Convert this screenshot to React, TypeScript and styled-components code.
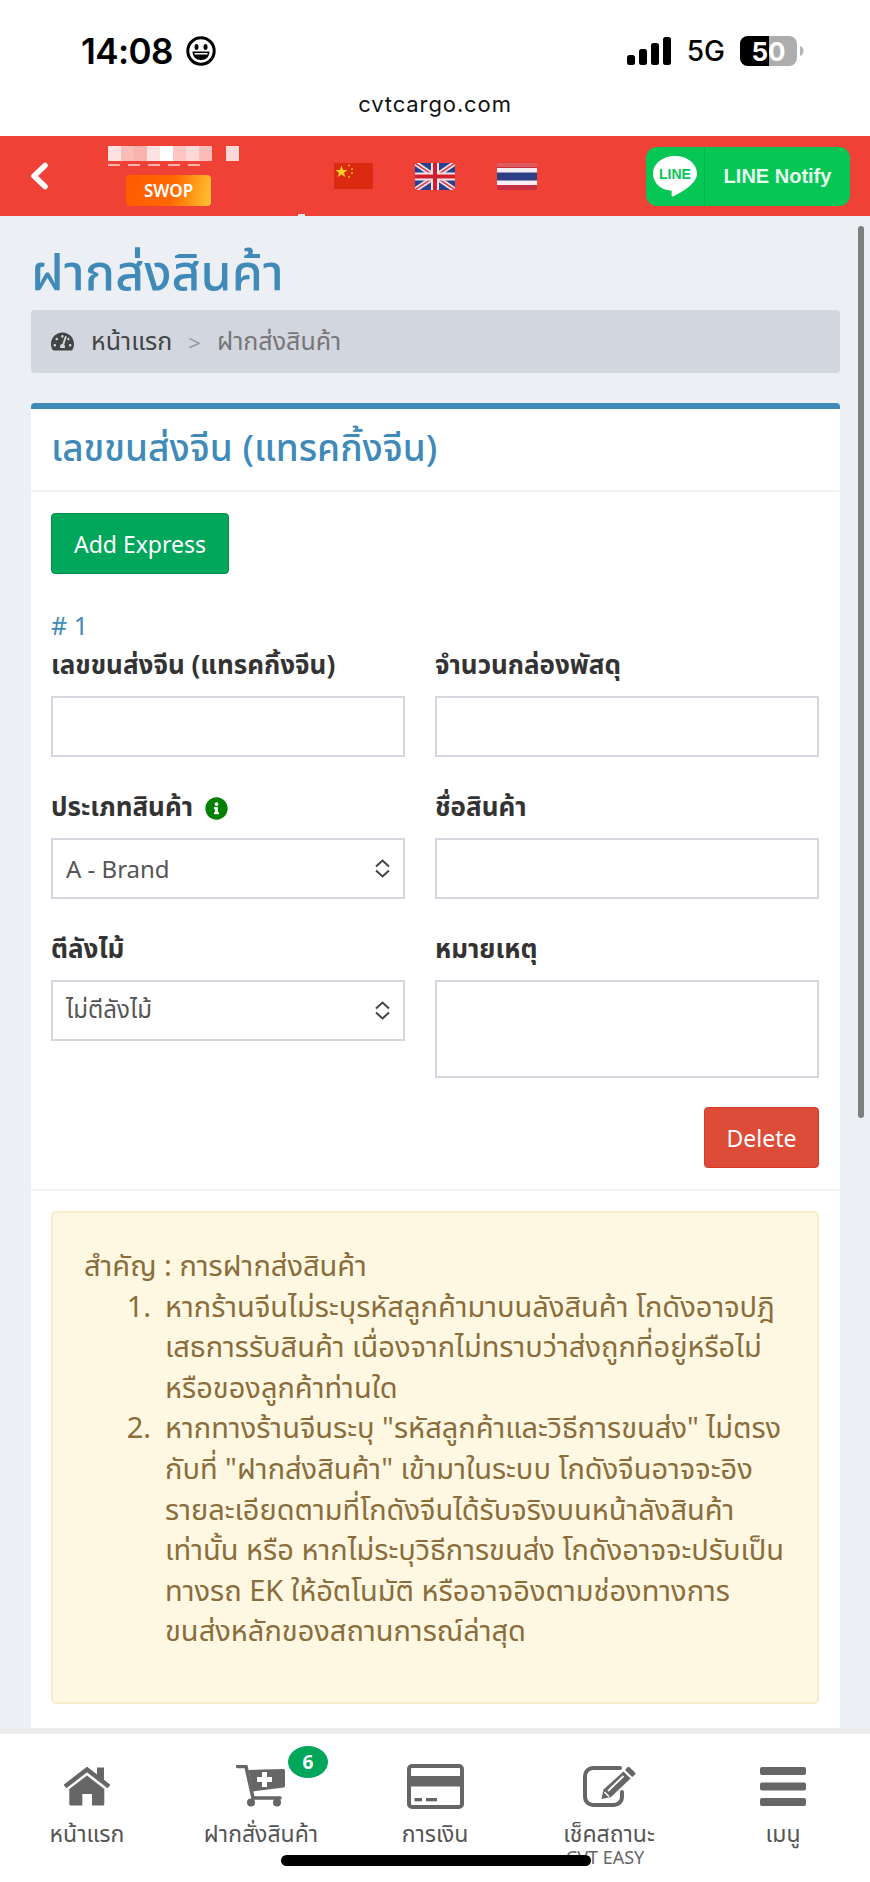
import React from "react";
import styled, { createGlobalStyle } from "styled-components";
import { FaTachometerAlt, FaInfoCircle } from "react-icons/fa";

const Global = createGlobalStyle`
  html, body { margin: 0; padding: 0; background: #fff; }
  * { box-sizing: border-box; }
  body { font-family: "Noto Sans", "Noto Sans Thai", "Liberation Sans", sans-serif; }
`;

const Page = styled.div`
  position: relative;
  width: 870px;
  height: 1882px;
  overflow: hidden;
  display: flex;
  flex-direction: column;
  background: #ecf0f5;
`;

const Chrome = styled.div`
  height: 136px;
  background: #fff;
  display: flex;
  flex-direction: column;
`;
const StatusRow = styled.div`
  height: 89px;
  padding: 36px 66px 0 81px;
  display: flex;
  align-items: flex-start;
  justify-content: space-between;
`;
const TimeGroup = styled.div`
  display: flex;
  align-items: center;
  gap: 13px;
  height: 30px;
`;
const Time = styled.span`
  font-family: Inter, sans-serif;
  font-weight: 600;
  font-size: 35px;
  letter-spacing: -0.6px;
  color: #000;
`;
const StatusRight = styled.div`
  display: flex;
  align-items: center;
  height: 30px;
  gap: 15px;
`;
const Net = styled.span`
  font-family: Inter, sans-serif;
  font-size: 28px;
  font-weight: 500;
  color: #000;
`;
const Url = styled.div`
  text-align: center;
  font-family: Inter, sans-serif;
  font-size: 22px;
  letter-spacing: 0.9px;
  color: #111;
  line-height: 30px;
`;

const Header = styled.header`
  position: relative;
  height: 80px;
  background: #f04137;
  display: flex;
  align-items: center;
  padding-right: 20px;
`;
const Back = styled.div`
  width: 60px;
  padding-left: 30px;
  display: flex;
`;
const UserCol = styled.div`
  width: 137px;
  margin-left: 48px;
  display: flex;
  flex-direction: column;
  align-items: center;
`;
const Mosaic = styled.div`
  width: 137px;
  height: 15px;
  display: flex;
`;
const MosaicCell = styled.i<{ $a: number; $w?: number }>`
  display: block;
  width: ${(p) => p.$w ?? 13}px;
  height: 100%;
  background: rgba(255, 255, 255, ${(p) => p.$a});
`;
const MosaicTrace = styled.div`
  width: 137px;
  height: 2px;
  margin: 3px 0 9px;
  background: repeating-linear-gradient(90deg, rgba(255, 255, 255, 0.6) 0 12px, transparent 12px 20px) 0 0 / 95px 2px no-repeat;
`;
const Swop = styled.div`
  width: 85px;
  height: 31px;
  margin-right: 16px;
  border-radius: 4px;
  background: linear-gradient(100deg, #ff5a00 0%, #ff6a00 55%, #ffc531 100%);
  color: #fff;
  font-weight: 600;
  font-size: 17px;
  text-align: center;
  line-height: 31px;
`;
const Flags = styled.div`
  margin-left: 89px;
  display: flex;
  gap: 42px;
  align-items: center;
`;
const LineBtn = styled.div`
  margin-left: auto;
  width: 204px;
  height: 59px;
  border-radius: 11px;
  background: #06c755;
  display: flex;
  align-items: center;
`;
const LineIconCell = styled.div`
  width: 59px;
  height: 100%;
  border-right: 1px solid #05b54c;
  display: flex;
  align-items: center;
  justify-content: center;
`;
const LineText = styled.span`
  flex: 1;
  text-align: center;
  color: #e6f9ee;
  font-family: "Liberation Sans", sans-serif;
  font-weight: 700;
  font-size: 20px;
`;
const Tick = styled.div`
  position: absolute;
  left: 298px;
  bottom: 0;
  width: 7px;
  height: 2px;
  background: #f3e9ea;
`;

const Main = styled.main`
  flex: 1;
  min-height: 0;
  overflow: hidden;
  padding: 0 30px 0 31px;
`;
const Title = styled.h1`
  margin: 21px 0 5px;
  font-size: 50px;
  line-height: 68px;
  font-weight: 500;
  color: #408ab9;
`;
const Crumb = styled.div`
  height: 63px;
  border-radius: 4px;
  background: #d2d6de;
  padding: 0 20px;
  display: flex;
  align-items: center;
  font-size: 25px;
  color: #444;
`;
const CrumbIcon = styled.span`
  display: flex;
  font-size: 23px;
  margin-right: 17px;
`;
const CrumbSep = styled.span`
  color: #999;
  font-size: 22px;
  margin: 0 16px;
`;
const CrumbNow = styled.span`
  color: #777;
`;
const Card = styled.section`
  margin-top: 30px;
  background: #fff;
  border-top: 6px solid #408ab9;
  border-radius: 4px 4px 0 0;
`;
const CardHead = styled.div`
  height: 83px;
  padding: 0 20px;
  border-bottom: 2px solid #f4f4f4;
  display: flex;
  align-items: center;
`;
const CardTitle = styled.h3`
  margin: 0;
  font-size: 37px;
  font-weight: 500;
  color: #408ab9;
`;
const CardBody = styled.div`
  padding: 21px 21px 21px 20px;
  border-bottom: 2px solid #f4f4f4;
`;
const Btn = styled.div<{ $bg: string; $edge: string; $w: number }>`
  width: ${(p) => p.$w}px;
  height: 61px;
  border-radius: 4px;
  background: ${(p) => p.$bg};
  border: 1px solid ${(p) => p.$edge};
  color: #fff;
  font-size: 23px;
  display: flex;
  align-items: center;
  justify-content: center;
`;
const Num = styled.div`
  margin-top: 34px;
  font-size: 25px;
  line-height: 34px;
  color: #408ab9;
`;
const FormGrid = styled.div`
  display: grid;
  grid-template-columns: 354px 384px;
  column-gap: 30px;
  align-items: start;
`;
const Field = styled.div`
  display: flex;
  flex-direction: column;
  margin-bottom: 27px;
`;
const Label = styled.label`
  display: flex;
  align-items: center;
  gap: 12px;
  height: 54px;
  padding-bottom: 6px;
  font-size: 26px;
  font-weight: 700;
  color: #333;
`;
const Box = styled.div<{ $h?: number }>`
  height: ${(p) => p.$h ?? 61}px;
  border: 2px solid #d6d6de;
  background: #fff;
  display: flex;
  align-items: center;
  justify-content: space-between;
  padding: 0 12px 0 13px;
  font-size: 24px;
  color: #555;
`;
const InfoIcon = styled.span`
  display: flex;
  color: #008000;
  font-size: 23px;
`;
const Actions = styled.div`
  display: flex;
  justify-content: flex-end;
  margin-top: 2px;
`;
const Foot = styled.div`
  padding: 20px 21px 24px 20px;
`;
const Alert = styled.div`
  height: 493px;
  padding: 32px 0 0 31px;
  background: #fef8e2;
  border: 2px solid #f8eccb;
  border-radius: 5px;
  color: #8a6d3b;
  font-size: 29px;
  line-height: 40.6px;
  white-space: nowrap;
`;
const NoteList = styled.ol`
  margin: 0;
  padding: 0;
  list-style: none;
`;
const NoteItem = styled.li`
  display: flex;
`;
const NoteNum = styled.span`
  flex: none;
  width: 67px;
  margin-right: 14px;
  text-align: right;
`;

const BottomNav = styled.nav`
  flex: none;
  height: 154px;
  border-top: 6px solid #ececec;
  background: #fff;
  display: grid;
  grid-template-columns: repeat(5, 174px);
`;
const NavItem = styled.div`
  position: relative;
  display: flex;
  flex-direction: column;
  align-items: center;
  padding-top: 28px;
`;
const NavIcon = styled.div`
  height: 48px;
  margin-bottom: 6px;
  display: flex;
  align-items: center;
  justify-content: center;
`;
const NavLabel = styled.span`
  font-size: 23px;
  line-height: 34px;
  color: #555;
`;
const NavSub = styled.span`
  margin-right: 8px;
  font-size: 18px;
  line-height: 14px;
  color: #666;
`;
const Badge = styled.span`
  position: absolute;
  top: 12px;
  left: 114px;
  width: 40px;
  height: 32px;
  border-radius: 50%;
  background: #00a65a;
  color: #fff;
  font-size: 19px;
  font-weight: 700;
  text-align: center;
  line-height: 32px;
`;
const HomeBar = styled.div`
  position: absolute;
  left: 281px;
  top: 1855px;
  width: 310px;
  height: 11px;
  border-radius: 6px;
  background: #000;
`;
const Scrollbar = styled.div`
  position: absolute;
  left: 858px;
  top: 226px;
  width: 6px;
  height: 892px;
  border-radius: 3px;
  background: #7f7f7f;
`;

const Smile = () => (
  <svg width="30" height="30" viewBox="0 0 30 30">
    <circle cx="15" cy="15" r="13.2" fill="none" stroke="#000" strokeWidth="3" />
    <ellipse cx="10.5" cy="11" rx="2" ry="3" fill="#000" />
    <ellipse cx="19.5" cy="11" rx="2" ry="3" fill="#000" />
    <path d="M6.5 15.5h17c0 5-3.5 8.5-8.5 8.5s-8.5-3.5-8.5-8.5z" fill="#000" />
    <path d="M8.5 17h13v1.5h-13z" fill="#fff" />
  </svg>
);
const Signal = () => (
  <svg width="45" height="28" viewBox="0 0 45 28">
    <rect x="0" y="18" width="8" height="10" rx="2.5" />
    <rect x="12" y="12" width="8" height="16" rx="2.5" />
    <rect x="24" y="6" width="8" height="22" rx="2.5" />
    <rect x="36" y="0" width="8" height="28" rx="2.5" />
  </svg>
);
const Battery = () => (
  <svg width="64" height="30" viewBox="0 0 64 30">
    <rect width="57" height="30" rx="8" fill="#adadad" />
    <path d="M8 0h21v30H8a8 8 0 0 1-8-8V8a8 8 0 0 1 8-8z" fill="#000" />
    <path d="M60 10c2.5.6 3.5 2.600 3.500 5s-1 4.400-3.500 5z" fill="#b5b5b5" />
    <text x="28.500" y="24.500" textAnchor="middle" fontFamily="Inter, sans-serif" fontWeight="700" fontSize="26" fill="#fff">50</text>
  </svg>
);
const BackIcon = () => (
  <svg width="19" height="28" viewBox="0 0 19 28" fill="none" stroke="#fff" strokeWidth="5.500" strokeLinecap="round" strokeLinejoin="round">
    <path d="M15 3.500L4 14l11 10.500" />
  </svg>
);
const ChinaFlag = () => (
  <svg width="39" height="26" viewBox="0 0 39 26">
    <rect width="39" height="26" fill="#dc2a12" />
    <polygon points="7.500,2.500 9,7 13.500,7 10,9.800 11.300,14 7.500,11.400 3.700,14 5,9.800 1.500,7 6,7" fill="#ffd21e" />
    <circle cx="15" cy="2.500" r="1" fill="#f5b21e" />
    <circle cx="18" cy="6" r="1" fill="#f5b21e" />
    <circle cx="18" cy="10" r="1" fill="#f5b21e" />
    <circle cx="15" cy="14" r="1" fill="#f5b21e" />
  </svg>
);
const UkFlag = () => (
  <svg width="40" height="27" viewBox="0 0 40 27">
    <rect width="40" height="27" fill="#27408f" />
    <path d="M0 0L40 27M40 0L0 27" stroke="#f3e3e6" strokeWidth="5" />
    <path d="M0 0L40 27M40 0L0 27" stroke="#d33a4a" strokeWidth="1.500" />
    <path d="M20 0V27M0 13.500H40" stroke="#f3e3e6" strokeWidth="8" />
    <path d="M20 0V27M0 13.500H40" stroke="#d0202f" strokeWidth="4" />
  </svg>
);
const ThaiFlag = () => (
  <svg width="40" height="27" viewBox="0 0 40 27">
    <rect width="40" height="27" rx="1.500" fill="#c53043" />
    <rect y="0" width="40" height="4" fill="#dd5a5f" />
    <rect y="5" width="40" height="17" fill="#f6eef3" />
    <rect y="9.500" width="40" height="8" fill="#2c3f86" />
  </svg>
);
const LineLogo = () => (
  <svg width="44" height="41" viewBox="0 0 44 41">
    <path d="M22 0C9.800 0 0 7.800 0 17.500 0 27 8 34 17.500 34.500c.8 0 1.300.5 1.300 1.300l-.3 3.200c0 1.300 1 1.900 2.200 1.200C27 37 38 31 42 24c1.300-2 2-4.200 2-6.500C44 7.800 34.200 0 22 0z" fill="#fff" />
    <text x="22" y="23" textAnchor="middle" fontFamily="'Liberation Sans', sans-serif" fontWeight="700" fontSize="14" fill="#06c755">LINE</text>
  </svg>
);
const UpDown = () => (
  <svg width="17" height="19" viewBox="0 0 17 19" fill="none" stroke="#444" strokeWidth="2">
    <path d="M2 7.500L8.500 1.500 15 7.500M2 11.500L8.500 17.500 15 11.500" />
  </svg>
);
const HomeIcon = () => (
  <svg width="48" height="39" viewBox="0 0 48 39" fill="#666">
    <rect x="34" y="0.500" width="7" height="13" />
    <path d="M2 19.500L24 2.500l22 17" fill="none" stroke="#666" strokeWidth="4.500" />
    <path d="M24 8.500L41.300 22v15a1.500 1.500 0 0 1-1.500 1.500H29V27H19.300v11.500H7.800A1.500 1.500 0 0 1 6.300 37V22z" />
  </svg>
);
const CartIcon = () => (
  <svg width="50" height="42" viewBox="0 0 50 42" fill="#666">
    <path d="M1.500 1.500h8.500L17 33h27" fill="none" stroke="#666" strokeWidth="3.500" strokeLinecap="round" strokeLinejoin="round" />
    <path d="M12.500 5L47.500 4a1.500 1.500 0 0 1 1.500 1.500V21a1.500 1.500 0 0 1-1.300 1.500L17 26.500z" />
    <path d="M26 7h5v5h5v5h-5v5h-5v-5h-5v-5h5z" fill="#fff" />
    <circle cx="15" cy="37.500" r="4" />
    <circle cx="41" cy="37.500" r="4" />
  </svg>
);
const CardIcon = () => (
  <svg width="57" height="45" viewBox="0 0 57 45" fill="#666">
    <rect x="2" y="2" width="53" height="41" rx="3" fill="none" stroke="#666" strokeWidth="4" />
    <rect x="2" y="12" width="53" height="10.500" />
    <rect x="7.500" y="34" width="7.500" height="3.300" />
    <rect x="19" y="34" width="11" height="3.300" />
  </svg>
);
const EditIcon = () => (
  <svg width="53" height="42" viewBox="0 0 53 42" fill="#666">
    <path d="M37 3H10a8 8 0 0 0-8 8v21a8 8 0 0 0 8 8h21a8 8 0 0 0 8-8v-5" fill="none" stroke="#666" strokeWidth="4" strokeLinecap="round" />
    <path d="M18.500 34l2-9.500L40.500 6.500l7 7L28 32z" />
    <path d="M42 5l2.500-2.800a1.500 1.500 0 0 1 2 0L52 7.500a1.500 1.500 0 0 1 0 2l-2.700 2.500z" />
    <path d="M25 26L40.500 11" stroke="#fff" strokeWidth="1.800" />
    <path d="M21.500 27l4.500 4.500" stroke="#fff" strokeWidth="1.500" />
  </svg>
);
const BarsIcon = () => (
  <svg width="46" height="39" viewBox="0 0 46 39" fill="#666">
    <rect y="0" width="46" height="8" rx="2" />
    <rect y="15.500" width="46" height="8" rx="2" />
    <rect y="31" width="46" height="8" rx="2" />
  </svg>
);

const cells: [number, number?][] = [
  [0.85], [0.65], [0.6], [0.85], [1], [0.7], [0.8], [0.65], [0, 14], [0.8, 13],
];

export default function App() {
  return (
    <Page>
      <Global />
      <Chrome>
        <StatusRow>
          <TimeGroup>
            <Time>14:08</Time>
            <Smile />
          </TimeGroup>
          <StatusRight>
            <Signal />
            <Net>5G</Net>
            <Battery />
          </StatusRight>
        </StatusRow>
        <Url>cvtcargo.com</Url>
      </Chrome>
      <Header>
        <Back>
          <BackIcon />
        </Back>
        <UserCol>
          <Mosaic>
            {cells.map(([a, w], i) => (
              <MosaicCell key={i} $a={a} $w={w} />
            ))}
          </Mosaic>
          <MosaicTrace />
          <Swop>SWOP</Swop>
        </UserCol>
        <Flags>
          <ChinaFlag />
          <UkFlag />
          <ThaiFlag />
        </Flags>
        <LineBtn>
          <LineIconCell>
            <LineLogo />
          </LineIconCell>
          <LineText>LINE Notify</LineText>
        </LineBtn>
        <Tick />
      </Header>
      <Main>
        <Title>ฝากส่งสินค้า</Title>
        <Crumb>
          <CrumbIcon>
            <FaTachometerAlt />
          </CrumbIcon>
          หน้าแรก
          <CrumbSep>&gt;</CrumbSep>
          <CrumbNow>ฝากส่งสินค้า</CrumbNow>
        </Crumb>
        <Card>
          <CardHead>
            <CardTitle>เลขขนส่งจีน (แทรคกิ้งจีน)</CardTitle>
          </CardHead>
          <CardBody>
            <Btn $bg="#00a65a" $edge="#008d4c" $w={178}>Add Express</Btn>
            <Num># 1</Num>
            <FormGrid>
              <Field>
                <Label>เลขขนส่งจีน (แทรคกิ้งจีน)</Label>
                <Box />
              </Field>
              <Field>
                <Label>จำนวนกล่องพัสดุ</Label>
                <Box />
              </Field>
              <Field>
                <Label>
                  ประเภทสินค้า
                  <InfoIcon>
                    <FaInfoCircle />
                  </InfoIcon>
                </Label>
                <Box>
                  A - Brand
                  <UpDown />
                </Box>
              </Field>
              <Field>
                <Label>ชื่อสินค้า</Label>
                <Box />
              </Field>
              <Field>
                <Label>ตีลังไม้</Label>
                <Box>
                  ไม่ตีลังไม้
                  <UpDown />
                </Box>
              </Field>
              <Field>
                <Label>หมายเหตุ</Label>
                <Box $h={98} />
              </Field>
            </FormGrid>
            <Actions>
              <Btn $bg="#dd4b39" $edge="#d73925" $w={115}>Delete</Btn>
            </Actions>
          </CardBody>
          <Foot>
            <Alert>
              สำคัญ : การฝากส่งสินค้า
              <NoteList>
                <NoteItem>
                  <NoteNum>1.</NoteNum>
                  <span>
                    หากร้านจีนไม่ระบุรหัสลูกค้ามาบนลังสินค้า โกดังอาจปฎิ
                    <br />
                    เสธการรับสินค้า เนื่องจากไม่ทราบว่าส่งถูกที่อยู่หรือไม่
                    <br />
                    หรือของลูกค้าท่านใด
                  </span>
                </NoteItem>
                <NoteItem>
                  <NoteNum>2.</NoteNum>
                  <span>
                    หากทางร้านจีนระบุ "รหัสลูกค้าและวิธีการขนส่ง" ไม่ตรง
                    <br />
                    กับที่ "ฝากส่งสินค้า" เข้ามาในระบบ โกดังจีนอาจจะอิง
                    <br />
                    รายละเอียดตามที่โกดังจีนได้รับจริงบนหน้าลังสินค้า
                    <br />
                    เท่านั้น หรือ หากไม่ระบุวิธีการขนส่ง โกดังอาจจะปรับเป็น
                    <br />
                    ทางรถ EK ให้อัตโนมัติ หรืออาจอิงตามช่องทางการ
                    <br />
                    ขนส่งหลักของสถานการณ์ล่าสุด
                  </span>
                </NoteItem>
              </NoteList>
            </Alert>
          </Foot>
        </Card>
      </Main>
      <BottomNav>
        <NavItem>
          <NavIcon><HomeIcon /></NavIcon>
          <NavLabel>หน้าแรก</NavLabel>
        </NavItem>
        <NavItem>
          <NavIcon><CartIcon /></NavIcon>
          <NavLabel>ฝากสั่งสินค้า</NavLabel>
          <Badge>6</Badge>
        </NavItem>
        <NavItem>
          <NavIcon><CardIcon /></NavIcon>
          <NavLabel>การเงิน</NavLabel>
        </NavItem>
        <NavItem>
          <NavIcon><EditIcon /></NavIcon>
          <NavLabel>เช็คสถานะ</NavLabel>
          <NavSub>CVT EASY</NavSub>
        </NavItem>
        <NavItem>
          <NavIcon><BarsIcon /></NavIcon>
          <NavLabel>เมนู</NavLabel>
        </NavItem>
      </BottomNav>
      <HomeBar />
      <Scrollbar />
    </Page>
  );
}
